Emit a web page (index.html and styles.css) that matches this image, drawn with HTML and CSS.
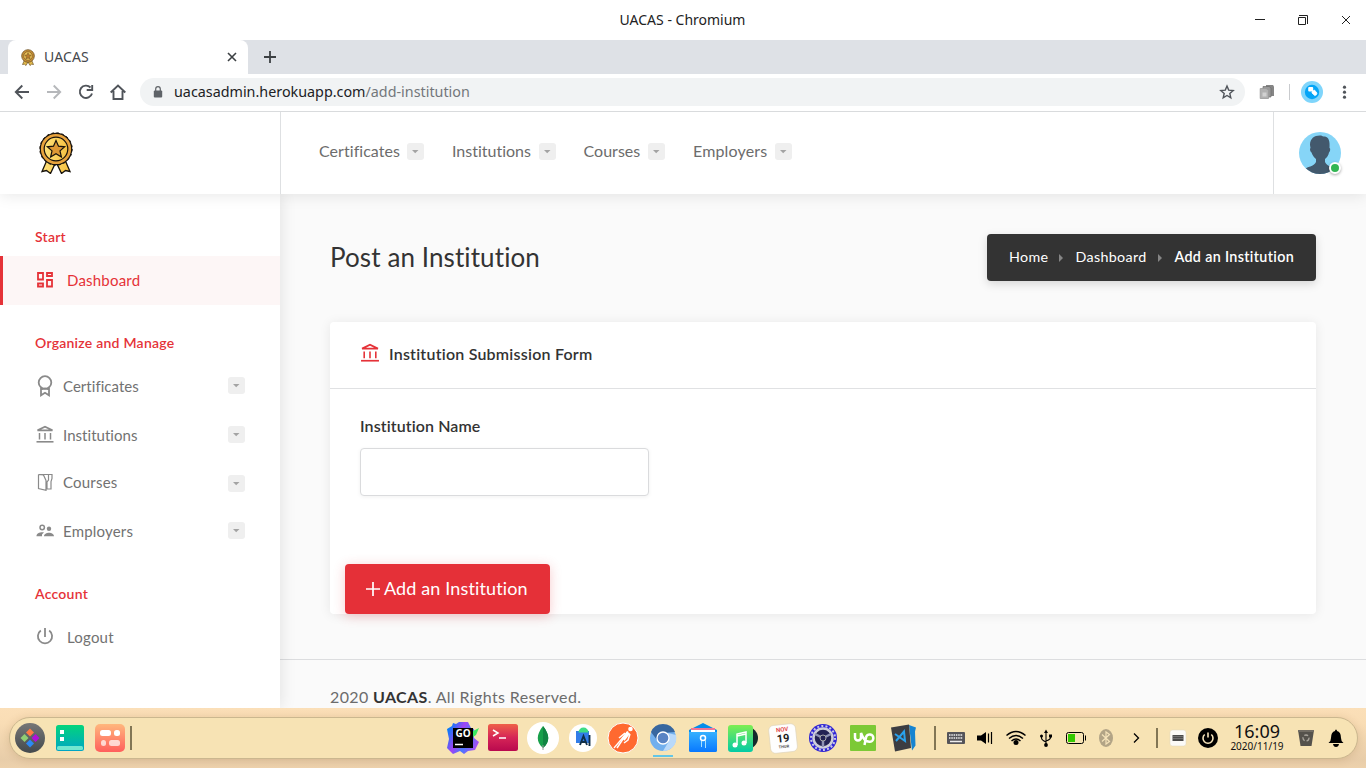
FILE: index.html
```html
<!DOCTYPE html>
<html lang="en">
<head>
<meta charset="utf-8">
<title>UACAS</title>
<link rel="stylesheet" href="styles.css">
</head>
<body>
<svg class="defs" aria-hidden="true">
  <defs>
    <linearGradient id="gold" x1="0" y1="0" x2="1" y2="0"><stop offset="0" stop-color="#ffe27a"/><stop offset="1" stop-color="#f6c142"/></linearGradient>
    <symbol id="medal" viewBox="0 0 34 42">
      <path d="M8 28 3 39.500 7.500 38.500 11.500 41.500 16 32h2l4.500 9.500 4-3 4.500 1L26 28z" fill="url(#gold)" stroke="#17120c" stroke-width="1.300"/>
      <circle cx="17" cy="17" r="15.700" fill="#e8a33d" stroke="#17120c" stroke-width="1.200"/>
      <circle cx="17" cy="17" r="16.200" fill="none" stroke="#17120c" stroke-width="1" stroke-dasharray="2.500 2.590"/>
      <circle cx="17" cy="17" r="11.800" fill="url(#gold)" stroke="#17120c" stroke-width="1.200"/>
      <path d="m17 8.500 2.500 5.700 6.200.6-4.700 4.100 1.400 6.100-5.400-3.200-5.400 3.200 1.400-6.100-4.700-4.100 6.200-.6z" fill="#dd9835" stroke="#17120c" stroke-width="1.200"/>
    </symbol>
    <symbol id="medal-small" viewBox="0 0 14 17">
      <path d="M3.500 11 1.500 15.500l2-.3 1.500 1.300L7 13l2 3.500 1.500-1.300 2 .3-2-4.500z" fill="#e8bf4e" stroke="#6d5326" stroke-width=".7"/>
      <circle cx="7" cy="7" r="6.300" fill="#c98f35" stroke="#6d5326" stroke-width=".8"/>
      <circle cx="7" cy="7" r="4.300" fill="#ecc257" stroke="#6d5326" stroke-width=".6"/>
      <path d="m7 3.800 1 2.200 2.300.2-1.700 1.600.5 2.300L7 8.900l-2.100 1.200.5-2.300-1.700-1.600L6 6z" fill="#b97c2c" stroke="#6d5326" stroke-width=".5"/>
    </symbol>
    <symbol id="bank" viewBox="0 0 18 18">
      <path d="M1.500 5.300 9 1.700l7.500 3.600z" fill="none" stroke="currentColor" stroke-width="1.700"/>
      <path d="M3.500 8v6.500M9 8v6.500M14.500 8v6.500" stroke="currentColor" stroke-width="1.500"/>
      <path d="M.5 16.800h17" stroke="currentColor" stroke-width="1.600"/>
    </symbol>
    <symbol id="caret" viewBox="0 0 17 17"><path d="M5 7h6.500L8.200 10.300z" fill="#a3a3a3"/></symbol>
  </defs>
</svg>

<header class="titlebar">
  <span class="window-title">UACAS - Chromium</span>
  <svg class="window-controls" width="106" height="40" viewBox="0 0 106 40" fill="none" stroke="#222" stroke-width="1">
    <path d="M5 19.500h10M48.500 17.500h7v7h-7zM49 15.500h8.500V24M92 16l8 8M100 16l-8 8"/>
  </svg>
</header>

<div class="tabstrip">
  <div class="tab">
    <svg class="favicon"><use href="#medal-small"/></svg>
    <span class="tab-title">UACAS</span>
    <svg width="10" height="10" viewBox="0 0 10 10" stroke="#3c4043" stroke-width="1.600"><path d="M1 1l8 8M9 1 1 9"/></svg>
  </div>
  <svg class="new-tab" width="12" height="12" viewBox="0 0 12 12" stroke="#3c4043" stroke-width="1.800"><path d="M6 0v12M0 6h12"/></svg>
</div>

<div class="toolbar">
  <svg class="nav-icons" width="140" height="37" viewBox="0 0 140 37" fill="none" stroke="#50545a" stroke-width="1.900">
    <path d="M29 18H16M22.300 11.500 15.800 18l6.500 6.500"/>
    <path d="M47 18h13M53.700 11.500l6.500 6.500-6.500 6.500" stroke="#b6b8bb"/>
    <path d="M90.500 13.500a6.200 6.200 0 1 0 1.500 6M92.200 11v5h-5.500"/>
    <path d="M110.700 18.500 118 11.500l7.300 7M113.500 17v8h9v-8"/>
  </svg>
  <div class="omnibox">
    <svg width="10" height="12" viewBox="0 0 10 12"><rect x=".8" y="4.500" width="8.400" height="7" rx="1" fill="#5f6368"/><path d="M2.700 5V3a2.300 2.300 0 0 1 4.600 0v2" fill="none" stroke="#5f6368" stroke-width="1.200"/></svg>
    <span class="url">uacasadmin.herokuapp.com<span class="url-path">/add-institution</span></span>
    <svg class="bookmark" width="16" height="16" viewBox="0 0 16 16"><path d="m8 2 1.700 4.100 4.500.4-3.400 2.900 1 4.400L8 11.500l-3.800 2.300 1-4.400-3.400-2.900 4.500-.4z" fill="none" stroke="#50545a" stroke-width="1.400"/></svg>
  </div>
  <svg class="extensions" width="121" height="37" viewBox="0 0 121 37">
    <path d="M21 11h7l1 1.500V22h-8z" fill="#858585"/><path d="M18 12.500h6.500l1.500 2v8.500h-8z" fill="#999" stroke="#6d6d6d" stroke-width=".7"/><path d="M15.200 14.500h6l2.300 2v8h-8.300z" fill="#b1b1b1" stroke="#999" stroke-width=".8"/><path d="M17.500 18.500h4v4h-4z" fill="#d1d1d1"/>
    <path d="M44.500 10v16" stroke="#c9cbce"/>
    <circle cx="67" cy="18" r="11" fill="#7fd5fb"/><circle cx="67" cy="18" r="7.200" fill="#04a5f7"/>
    <rect x="63.200" y="13" width="5" height="4.600" rx="1" fill="#fff"/><path d="m67 17.800 2.400-1.800 2.600 3-.6 1.800-1.600.8-2.800-2.600z" fill="#fff" stroke="#fff" stroke-width=".8"/>
    <g fill="#50545a"><circle cx="99.500" cy="13.200" r="1.600"/><circle cx="99.500" cy="18.200" r="1.600"/><circle cx="99.500" cy="23.200" r="1.600"/></g>
  </svg>
</div>

<div class="page">
  <header class="app-header">
    <div class="brand"><svg width="34" height="42"><use href="#medal"/></svg></div>
    <nav class="top-nav">
      <a class="top-link"><span class="w-cert">Certificates</span><svg class="toggle"><use href="#caret"/></svg></a>
      <a class="top-link"><span class="w-inst">Institutions</span><svg class="toggle"><use href="#caret"/></svg></a>
      <a class="top-link"><span class="w-cour">Courses</span><svg class="toggle"><use href="#caret"/></svg></a>
      <a class="top-link"><span class="w-empl">Employers</span><svg class="toggle"><use href="#caret"/></svg></a>
    </nav>
    <div class="profile">
      <div class="avatar">
        <svg width="42" height="42" viewBox="0 0 42 42"><clipPath id="round"><circle cx="21" cy="21" r="21"/></clipPath><g clip-path="url(#round)"><path d="M0 0h42v42H0z" fill="#86d5f7"/><path d="M11 13c0-7 5-10 11-9.500 1 .5 2 1 4 1 4 1 5 5 4.500 11.500 1 0 1 3-.5 4.500-.5 3-2 5-4 6.500v3c2 5 8 4 11 8v4H5v-4c3-4 10-3 12-8v-3c-2-1.500-3.500-3.500-4.500-6.500-1.500-1-2-4-1-4.500z" fill="#43596d"/></g></svg>
        <i class="online"></i>
      </div>
    </div>
  </header>

  <div class="app-body">
    <aside class="sidebar">
      <h6 class="side-heading">Start</h6>
      <a class="side-link active spaced">
        <svg width="18" height="18" viewBox="0 0 18 18" fill="none" stroke="currentColor" stroke-width="1.800"><path d="M2 2h5v6.500H2zM11 2h5v3h-5zM2 12.500h5v3H2zM11 9h5v6.500h-5z"/></svg>
        <span>Dashboard</span>
      </a>
      <h6 class="side-heading later">Organize and Manage</h6>
      <a class="side-link">
        <svg width="18" height="22" viewBox="0 0 18 22" fill="none" stroke="currentColor" stroke-width="1.800"><circle cx="9" cy="7.500" r="6.300"/><path d="M5 12.500v7.800l4-2.500 4 2.500v-7.800M5 14.500l4-1 4 1"/></svg>
        <span>Certificates</span><svg class="toggle"><use href="#caret"/></svg>
      </a>
      <a class="side-link">
        <svg class="raised" width="18" height="18"><use href="#bank"/></svg>
        <span>Institutions</span><svg class="toggle"><use href="#caret"/></svg>
      </a>
      <a class="side-link short">
        <svg width="18" height="18" viewBox="0 0 18 18" fill="none" stroke="currentColor" stroke-width="1.200"><path d="M2.500 1.500h13.500v4l-1 3v7.500h-5M2.500 1.500V15.500l7.500 1.800V7.500L7.500 2M2.500 1.500l5 .5M12.500 2v5l-1.500 2v7"/></svg>
        <span class="looser">Courses</span><svg class="toggle"><use href="#caret"/></svg>
      </a>
      <a class="side-link">
        <svg width="18" height="18" viewBox="0 0 18 18"><g fill="currentColor"><path d="M.5 14.200c0-3 3-4.300 7.500-4L6 12.500v1.700zM8 14.200c0-4.700 10-4.700 10 0z"/><circle cx="13" cy="6.700" r="2.200"/></g><circle cx="6.200" cy="5.500" r="2.200" fill="none" stroke="currentColor" stroke-width="1.500"/></svg>
        <span class="looser">Employers</span><svg class="toggle"><use href="#caret"/></svg>
      </a>
      <h6 class="side-heading later">Account</h6>
      <a class="side-link spaced">
        <svg class="raised" width="18" height="18" viewBox="0 0 18 18" fill="none" stroke="currentColor" stroke-width="1.800"><path d="M9 1v9M4.800 3.500a7.100 7.100 0 1 0 8.400 0"/></svg>
        <span class="looser">Logout</span>
      </a>
    </aside>

    <main class="content">
      <div class="page-head">
        <h1>Post an Institution</h1>
        <nav class="breadcrumb">
          <span class="b-home">Home</span><i></i><span class="b-dash">Dashboard</span><i></i><b>Add an Institution</b>
        </nav>
      </div>
      <section class="card">
        <header class="card-head"><svg width="20" height="20"><use href="#bank"/></svg><span>Institution Submission Form</span></header>
        <form class="card-body">
          <label for="name">Institution Name</label>
          <input id="name" type="text">
          <button type="button"><svg width="14" height="14" viewBox="0 0 14 14" stroke="#fff" stroke-width="1.700"><path d="M7 0v14M0 7h14"/></svg><span>Add an Institution</span></button>
        </form>
      </section>
      <footer class="page-foot">2020 <b>UACAS</b>. All Rights Reserved.</footer>
    </main>
  </div>
</div>

<div class="desktop">
  <div class="dock">
    <svg class="app" viewBox="0 0 40 40"><defs><linearGradient id="g1" x2="0" y2="1"><stop stop-color="#777"/><stop offset="1" stop-color="#434a4d"/></linearGradient></defs><circle cx="20" cy="20" r="15" fill="url(#g1)"/><path d="m20 10.500 4 4-4 4-4-4z" fill="#ff7943"/><path d="m14.500 16 4 4-4 4-4-4z" fill="#8fce73"/><path d="m25.500 16 4 4-4 4-4-4z" fill="#b010d8"/><path d="m20 21.500 4 4-4 4-4-4z" fill="#2c89f5"/></svg>
    <svg class="app" viewBox="0 0 40 40"><defs><linearGradient id="g2" x2="0" y2="1"><stop stop-color="#03d47c"/><stop offset="1" stop-color="#00a5c5"/></linearGradient></defs><rect x="6" y="7" width="28" height="26" rx="2.500" fill="url(#g2)"/><path d="M10 12h4v4h-4zM10 19h4v4h-4z" fill="#fff"/><rect x="7" y="28" width="26" height="4" rx="1.500" fill="#71e7d0"/></svg>
    <svg class="app" viewBox="0 0 40 40"><defs><linearGradient id="g3" x2="0" y2="1"><stop stop-color="#ffb77d"/><stop offset="1" stop-color="#ff5f5c"/></linearGradient></defs><rect x="5" y="6" width="30" height="28" rx="5" fill="url(#g3)"/><g fill="#fff"><rect x="10" y="12" width="11" height="6" rx="2.500"/><rect x="24" y="12" width="6" height="6" rx="2.500"/><g opacity=".7"><rect x="11" y="22" width="5" height="6" rx="2.500"/><rect x="19" y="22" width="11" height="6" rx="2.500"/></g></g></svg>
    <i class="sep"></i>
    <div class="apps">
      <svg class="app" viewBox="0 0 40 40"><defs><linearGradient id="g4" x1="0" y1=".3" x2="1" y2=".8"><stop stop-color="#077cf8"/><stop offset=".35" stop-color="#a143f4"/><stop offset=".6" stop-color="#4a78ff"/><stop offset="1" stop-color="#bd45f0"/></linearGradient></defs><path d="m10 5 3 1 3-2h9l3 6 3 1v9l5 4-4 8-7 1-4 3-4-3-7 3-6-6 2-9-2-10 5-3z" fill="url(#g4)"/><path d="m30 13 6-3-3 7-3 2z" fill="#3bea62"/><path d="M10 10h20v20H10z"/><path d="M12 26.500h8" stroke="#fff" stroke-width="1.500"/><text x="20" y="19" class="go">GO</text></svg>
      <svg class="app" viewBox="0 0 40 40"><defs><linearGradient id="g5" x2="0" y2="1"><stop stop-color="#ee6048"/><stop offset=".5" stop-color="#d62557"/><stop offset="1" stop-color="#b9094e"/></linearGradient></defs><rect x="5" y="6" width="30" height="27" rx="2.500" fill="url(#g5)"/><path d="m10 12 5 3-5 3M16 20h7" fill="none" stroke="#fff" stroke-width="1.500"/></svg>
      <svg class="app" viewBox="0 0 40 40"><circle cx="20" cy="20" r="16" fill="#fff"/><path d="M20 8c7 9 7 16 0 22-7-6-7-13 0-22z" fill="#18a04b"/><path d="M20 8c7 9 7 16 0 22z" fill="#128543"/><path d="M20 27v5" stroke="#999"/></svg>
      <svg class="app" viewBox="0 0 40 40"><circle cx="20" cy="20" r="14" fill="#fff"/><path d="M13 13h13v12H13z" fill="#327de8"/><path d="M15.500 14.500a5 5 0 0 1 10 0z" fill="#3ddc84"/><path d="m17 27 3.500-9 3.500 9M18 24h5M26.500 17v11" fill="none" stroke="#102f48" stroke-width="1.900"/></svg>
      <svg class="app" viewBox="0 0 40 40"><circle cx="20" cy="20" r="15" fill="#ff6930" stroke="#fff"/><circle cx="27.500" cy="11" r="2.300" fill="#fff"/><path d="M25 13.500 11 30" stroke="#fff" stroke-width="1.300"/><path d="m25.500 14.500-5.500 7" stroke="#fff" stroke-width="4"/><path d="m22 15-6 5M27 16l-2 6-4 3M20 21l-6 9" stroke="#fff" stroke-width="1.500" fill="none"/></svg>
      <svg class="app" viewBox="0 0 40 40"><circle cx="20" cy="20" r="13" fill="#71afed"/><path d="M8 14a13 13 0 0 1 24 0l-12 1-6 7z" fill="#38679f"/><path d="M33 17a13 13 0 0 1-13 16l6-10-1-8z" fill="#b9d9fa"/><circle cx="20" cy="20" r="6" fill="#5984c4" stroke="#fff" stroke-width="1.300"/><path d="M10 38h20" stroke="#63c6e7" stroke-width="2"/></svg>
      <svg class="app" viewBox="0 0 40 40"><defs><linearGradient id="g6" x2="0" y2="1"><stop stop-color="#35b1ff"/><stop offset="1" stop-color="#0878ff"/></linearGradient></defs><path d="m6 12 14-7 14 7v20q0 2-2 2H8q-2 0-2-2z" fill="#058deb"/><path d="M8 10h24v6H8z" fill="#fff"/><path d="M8 10h24v2H8z" fill="#ef7598"/><path d="M6 14h28v18q0 2-2 2H8q-2 0-2-2z" fill="url(#g6)"/><circle cx="20" cy="20" r="2.500" fill="none" stroke="#fff" stroke-width="1.500"/><path d="M18.500 23v6M22.500 22v8" stroke="#a8e1ff"/></svg>
      <svg class="app" viewBox="0 0 40 40"><defs><linearGradient id="g7" x2="0" y2="1"><stop stop-color="#7eee51"/><stop offset="1" stop-color="#02cba6"/></linearGradient></defs><circle cx="24" cy="20" r="11" fill="#132a2b"/><rect x="5" y="7" width="25" height="27" rx="3" fill="url(#g7)"/><path d="M14 27V16l9-2v11M14 18l9-2" fill="none" stroke="#fff" stroke-width="1.500"/><g fill="#fff"><circle cx="12" cy="27" r="2.500"/><circle cx="21" cy="25" r="2.500"/></g></svg>
      <svg class="app" viewBox="0 0 40 40"><g transform="rotate(-6 20 20)"><rect x="6.500" y="6.500" width="27" height="28" rx="5" fill="#fefefe" stroke="#dfd4bc" stroke-width=".7"/><text x="20" y="13.500" class="month">NOV</text><text x="20" y="24" class="day">19</text><text x="20" y="30" class="week">THUR</text></g></svg>
      <svg class="app" viewBox="0 0 40 40"><circle cx="20" cy="20" r="14" fill="#3126d5"/><circle cx="20" cy="20" r="12" fill="none" stroke="#c9c9e4" stroke-width="2" stroke-dasharray="2 2.190"/><circle cx="20" cy="20" r="9.500" fill="#242353" stroke="#cfcfda" stroke-width="2.500"/><path d="M20 20v9M20 20l-8-4M20 20l8-4" stroke="#8f93b4" stroke-width="2.500"/><circle cx="20" cy="20" r="3" fill="#242353" stroke="#aaa"/></svg>
      <svg class="app" viewBox="0 0 40 40"><rect x="7" y="7" width="26" height="26" rx="1" fill="#7cc936"/><path d="M12 15v4.500a3 3 0 0 0 6 0V15q1.500 4.500 4 7M21.500 27l1.500-7.500a3.700 3.700 0 1 1 3.300 4.300q-2.300 0-4.300-1.800" fill="none" stroke="#fff" stroke-width="2.500"/></svg>
      <svg class="app" viewBox="0 0 40 40"><path d="m26 7 7 2.500-1 4 .5 14-3.500 5z" fill="#1684d1"/><path d="m8 9.500 18-3 2 23.500-16 3.500z" fill="#3c3d42"/><path d="m12 16 10 7-1-9.500L13 23" stroke="#29a2ed" stroke-width="2" fill="none"/></svg>
    </div>
    <i class="sep second"></i>
    <svg class="tray" viewBox="0 0 30 40"><rect x="6" y="14" width="18" height="12" rx="1" fill="#555459"/><path d="M8 17h14M8 20h14" stroke="#eee" stroke-width="1.500" stroke-dasharray="1.500 .8"/><path d="M9 23.500h12" stroke="#eee" stroke-width="1.500"/></svg>
    <svg class="tray" viewBox="0 0 30 40"><path d="M6 17.500h4l5-3.500v12l-5-3.500H6z"/><path d="M17.500 15.500v9M20.500 14v12" stroke="#000" stroke-width="1.200"/></svg>
    <svg class="tray" viewBox="0 0 30 40"><g fill="none" stroke="#000" stroke-width="1.500"><path d="M5.500 17.500q9.500-8 19 0M8 20.500q7-6 14 0M10.500 23q4.500-4 9 0"/></g><circle cx="15" cy="24.500" r="2.500"/></svg>
    <svg class="tray" viewBox="0 0 30 40"><path d="M15 14v14M10.500 18v2q0 2 4.500 4M19.500 18v1.500q0 2-4.500 3.500" fill="none" stroke="#000" stroke-width="1.100"/><path d="m15 11.500 2 3.500h-4zM18 16.500h3v3h-3z"/><circle cx="10.500" cy="18" r="1.500"/><circle cx="15" cy="27" r="1.900"/></svg>
    <svg class="tray" viewBox="0 0 30 40"><rect x="5.500" y="14.500" width="17" height="11" rx="2" fill="none" stroke="#000"/><path d="M7 16h7v8H7z" fill="#34c900"/><path d="M24.500 17.500v5" stroke="#000"/></svg>
    <svg class="tray" viewBox="0 0 30 40"><ellipse cx="15" cy="20" rx="7" ry="9" fill="#b2a486"/><path d="m11 16.500 7.500 7L15 26V14l3.500 2.500-7.500 7" fill="none" stroke="#f5e3ba" stroke-width="1.200"/></svg>
    <svg class="tray" viewBox="0 0 30 40"><path d="m13 15.500 4.500 4.500-4.500 4.500" fill="none" stroke="#000" stroke-width="1.300"/></svg>
    <i class="sep third"></i>
    <svg class="tray" viewBox="0 0 30 40"><rect x="7" y="12" width="16" height="16" rx="2.500" fill="#fbfaf7" stroke="#ddd4bc" stroke-width=".5"/><path d="M9.500 17h11v6h-11z" fill="#4b4b4b"/><path d="M10.500 18.500h9M10.500 20.500h9" stroke="#ccc" stroke-width=".6" stroke-dasharray="1 1"/></svg>
    <svg class="tray" viewBox="0 0 30 40"><circle cx="15" cy="20" r="10"/><path d="M15 14.500v5M11.700 16.500a5 5 0 1 0 6.600 0" fill="none" stroke="#f5e3ba" stroke-width="1.600"/></svg>
    <div class="clock"><span class="time">16:09</span><span class="date">2020/11/19</span></div>
    <svg class="tray" viewBox="0 0 30 40"><path d="M7 12h16l-2.500 16h-11z" fill="#55524c"/><path d="M7 12h16v2H7z" fill="#716c63"/><circle cx="15" cy="20" r="3" fill="none" stroke="#aaa69d" stroke-width="1.300" stroke-dasharray="4 2"/></svg>
    <svg class="tray" viewBox="0 0 30 40"><path d="M7.500 25q2.500-1.500 2.500-5 0-6 4-7 0-1.500 1-1.500t1 1.500q4 1 4 7 0 3.500 2.500 5zM12 26h6q-.5 3-3 3t-3-3z"/></svg>
  </div>
</div>
</body>
</html>
```
FILE: styles.css
```css
* { box-sizing: border-box; }
body { margin: 0; width: 1366px; height: 768px; overflow: hidden; display: flex; flex-direction: column; background: #fff; font-family: Lato, "Noto Sans", sans-serif; font-variant-ligatures: none; color: #333; }
svg { display: block; flex: none; }
i { display: block; flex: none; }
.defs { position: absolute; width: 0; height: 0; }

/* Browser window */
.titlebar, .tabstrip, .toolbar { font-family: "Noto Sans", sans-serif; flex: none; display: flex; }
.titlebar { height: 40px; align-items: center; padding-left: 619px; font-size: 14px; color: #222; }
.window-title { flex: 1; padding: 0 0 2px .5px; }
.window-controls { margin-right: 10px; }
.tabstrip { height: 34px; background: #dee1e6; padding-left: 8px; align-items: center; }
.tab { width: 240px; height: 34px; background: #fff; border-radius: 8px 8px 0 0; display: flex; align-items: center; padding: 0 11px 0 12px; font-size: 14px; color: #45484c; }
.favicon { width: 16px; height: 17px; }
.tab-title { flex: 1; margin-left: 8px; padding-bottom: 2px; letter-spacing: .1px; }
.new-tab { margin-left: 16px; }
.toolbar { height: 38px; border-bottom: 1px solid #d9dbdd; }
.omnibox { width: 1105px; height: 28px; margin-top: 4px; border-radius: 14px; background: #f1f3f4; display: flex; align-items: center; padding: 0 10px 0 13px; font-size: 14.330px; }
.url { flex: 1; margin-left: 11px; padding-bottom: 2px; color: #202124; }
.url-path { color: #73777b; }

/* Application frame */
.page { height: 596px; flex: none; overflow: hidden; display: flex; flex-direction: column; background: #fafafa; }
.app-header { height: 82px; flex: none; display: flex; background: #fff; position: relative; z-index: 2; box-shadow: 0 1px 15px rgba(0,0,0,.1); }
.brand { width: 281px; border-right: 1px solid #dee0e2; padding: 20px 0 0 39px; }
.top-nav { flex: 1; display: flex; gap: 28px; padding-left: 38px; align-items: center; padding-bottom: 3px; font-size: 16px; color: #6c6c6c; }
.top-link { display: flex; align-items: center; gap: 7px; white-space: nowrap; }
.top-link span { padding-bottom: 2px; }
.toggle { width: 17px; height: 17px; border-radius: 3px; background: #efefef; }
.w-cert { width: 81px; letter-spacing: .05px; }
.w-inst { width: 79.600px; }
.w-cour { width: 57.400px; }
.w-empl { width: 75px; letter-spacing: .15px; }
.profile { width: 93px; border-left: 1px solid #dee0e2; padding: 20px 0 0 25px; }
.avatar { position: relative; width: 42px; }
.online { position: absolute; right: 0; bottom: 0; width: 12px; height: 12px; border: 2px solid #fff; border-radius: 50%; background: #32b653; box-shadow: 0 1px 3px rgba(0,0,0,.35); }
.app-body { flex: 1; display: flex; min-height: 0; }
.sidebar { width: 280px; background: #fff; padding-top: 24px; box-shadow: 1px 0 15px rgba(0,0,0,.1); position: relative; z-index: 1; }
.side-heading { margin: 0; height: 38px; line-height: 38px; padding-left: 35px; font-size: 14px; font-weight: 600; letter-spacing: .24px; color: #e53238; }
.later { margin-top: 19px; }
.side-link { height: 49px; padding: 0 35px 2px 36px; display: flex; align-items: center; font-size: 15px; letter-spacing: .04px; color: #727272; }
.side-link > svg:first-child { color: #8a8a8a; }
.side-link > .raised { margin-bottom: 2px; }
.side-link span { flex: 1; margin-left: 9px; }
.side-link.spaced span { margin-left: 13px; }
.side-link .looser { letter-spacing: .2px; }
.side-link.short { height: 47px; }
.side-link.short span { margin-bottom: 1px; }
.side-link.short > svg:first-child { margin-bottom: 1px; }
.side-link.short .toggle { margin-top: 2px; }
.side-link.active { background: #fdf6f6; border-left: 3px solid #e53238; padding-left: 33px; color: #e53238; letter-spacing: .2px; }
.side-link.active > svg:first-child { color: #e53238; }

/* Main column */
.content { flex: 1; padding-top: 40px; }
.page-head { height: 47px; margin: 0 50px; display: flex; align-items: center; justify-content: space-between; }
h1 { margin: 0; padding-bottom: 2px; font-size: 26px; font-weight: 400; letter-spacing: .1px; color: #333; }
.breadcrumb { width: 329px; height: 47px; border-radius: 4px; background: #333; color: #fff; display: flex; align-items: center; padding: 0 0 1px 22px; font-size: 14.300px; letter-spacing: .35px; box-shadow: 0 3px 10px rgba(0,0,0,.15); white-space: nowrap; }
.breadcrumb span, .breadcrumb b { padding-bottom: 1px; }
.breadcrumb b { font-weight: 600; }
.breadcrumb i { border: 4px solid transparent; border-left-color: #858585; border-right: 0; margin: 1px 12px 0 10px; }
.b-home { width: 40.400px; }
.b-dash { width: 73px; }
.card { margin: 41px 50px 0; height: 292px; background: #fff; border-radius: 4px; box-shadow: 0 1px 12px rgba(0,0,0,.08); }
.card-head { height: 67px; border-bottom: 1px solid #e0e1e3; display: flex; align-items: center; gap: 9px; padding: 0 0 2px 30px; font-size: 16px; font-weight: 600; letter-spacing: .22px; }
.card-head span { padding-bottom: 1px; }
.card-head svg { width: 20px; height: 19px; color: #e53238; margin-bottom: 3px; }
.card-body { padding: 25px 0 0 30px; display: flex; flex-direction: column; align-items: flex-start; }
.card-body label { height: 34px; line-height: 24px; font-size: 16px; font-weight: 600; letter-spacing: .1px; }
.card-body input { width: 289px; height: 48px; border: 1px solid #dadbdd; border-radius: 4px; background: #fff; box-shadow: 0 1px 4px rgba(0,0,0,.06); }
.card-body button { width: 205px; height: 50px; margin: 68px 0 0 -15px; border: 0; border-radius: 4px; background: #e53038; color: #fff; font: 18px Lato, sans-serif; letter-spacing: .13px; font-variant-ligatures: none; display: flex; align-items: center; gap: 4px; padding: 0 0 1px 21px; box-shadow: 0 2px 12px rgba(229,48,56,.25); white-space: nowrap; }
.card-body button span { padding-bottom: 1px; }
.page-foot { margin-top: 45px; border-top: 1px solid #dcdddf; padding: 25px 0 0 50px; font-size: 16px; letter-spacing: .36px; line-height: 24px; color: #6c6c6c; }
.page-foot b { color: #333; }

/* Desktop dock */
.desktop { height: 60px; flex: none; padding: 9px 8px 0 9px; background: linear-gradient(#fbdfb8, #f9ddb5 25%, #e8cda9 85%, #edd1ac); }
.dock { height: 42px; width: 1349px; border: 1px solid #cbb78f; border-radius: 21px; background: #f7e3b4; display: flex; align-items: center; box-shadow: 0 1px 8px rgba(120,80,30,.18); }
.app { width: 40px; height: 40px; }
.tray { width: 30px; height: 40px; }
.sep { width: 2px; height: 24px; background: #827655; }
.apps { display: flex; margin-left: 311px; }
.second { margin: 0 5px 0 11px; }
.third { margin: 0 5px; height: 20px; }
.clock { width: 68px; font-family: "Noto Sans", sans-serif; color: #111; display: flex; flex-direction: column; align-items: center; }
.time { font-size: 18px; line-height: 17px; }
.date { font-size: 10px; line-height: 13px; }
.go { font: bold 10px "Open Sans", sans-serif; fill: #fff; text-anchor: middle; }
.month { font: bold 6px Roboto, sans-serif; fill: #e44c4c; text-anchor: middle; }
.day { font: bold 11px Roboto, sans-serif; fill: #222; text-anchor: middle; }
.week { font: bold 4px Roboto, sans-serif; fill: #555; text-anchor: middle; }
```
